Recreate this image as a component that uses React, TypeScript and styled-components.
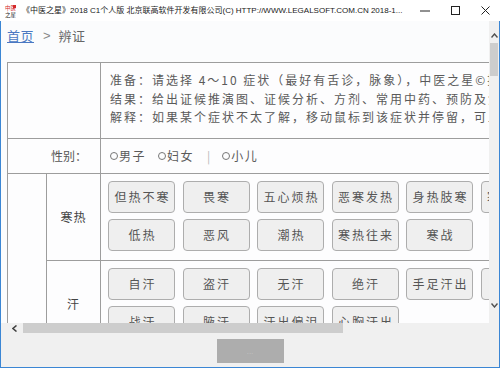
import React from "react";
import styled, { createGlobalStyle } from "styled-components";

const GlobalStyle = createGlobalStyle`
  html, body {
    margin: 0;
    padding: 0;
    background: #ffffff;
  }
  body {
    font-family: "Noto Sans CJK SC", sans-serif;
  }
`;

const Window = styled.div`
  width: 500px;
  height: 368px;
  display: flex;
  flex-direction: column;
  background: #ffffff;
  overflow: hidden;
`;

const TitleBar = styled.div`
  height: 21px;
  flex-shrink: 0;
  display: flex;
  align-items: center;
  padding-left: 5px;
  background: #ffffff;
`;

const TitleText = styled.div`
  flex: 1;
  margin-left: 5px;
  overflow: hidden;
  white-space: nowrap;
  font-family: "Liberation Sans", "Noto Sans CJK SC", sans-serif;
  font-size: 8px;
  line-height: 21px;
  color: #1a1a1a;
`;

const Controls = styled.div`
  display: flex;
  height: 21px;
`;

const ControlButton = styled.div`
  width: 30px;
  height: 21px;
  display: flex;
  align-items: center;
  justify-content: center;
`;

const Client = styled.div`
  flex: 1;
  display: flex;
  flex-direction: column;
  border: 1px solid #3b86d4;
  border-top: none;
  min-height: 0;
`;

const ScrollArea = styled.div`
  height: 302px;
  flex-shrink: 0;
  display: flex;
`;

const Viewport = styled.div`
  flex: 1;
  overflow: hidden;
  padding-left: 6px;
  background: #fbfcfd;
  color: #5a5a5a;
`;

const VScroll = styled.div`
  width: 10px;
  flex-shrink: 0;
  display: flex;
  flex-direction: column;
  align-items: center;
  background: #f0f0f0;
`;

const ArrowBox = styled.div<{ $h: number; $pad?: string }>`
  height: ${(p) => p.$h}px;
  width: 100%;
  flex-shrink: 0;
  display: flex;
  align-items: center;
  justify-content: center;
  padding: ${(p) => p.$pad || "0"};
  box-sizing: border-box;
`;

const VThumb = styled.div`
  width: 8px;
  height: 33px;
  flex-shrink: 0;
  background: #cdcdcd;
`;

const Spacer = styled.div`
  flex: 1;
`;

const HScroll = styled.div`
  height: 10px;
  flex-shrink: 0;
  display: flex;
  align-items: stretch;
  background: #f0f0f0;
`;

const HArrow = styled.div`
  width: 22px;
  display: flex;
  align-items: center;
  justify-content: center;
  padding-left: 4px;
  box-sizing: border-box;
`;

const HThumb = styled.div`
  width: 320px;
  background: #cdcdcd;
`;

const Footer = styled.div`
  flex: 1;
  display: flex;
  justify-content: center;
  align-items: flex-start;
  padding-top: 6px;
  background: #f0f0f0;
`;

const FooterButton = styled.div`
  width: 67px;
  height: 24px;
  background: #adadad;
  color: #c4c4c4;
  font-family: "Liberation Sans", sans-serif;
  font-size: 8px;
  line-height: 26px;
  text-align: center;
`;

const Breadcrumb = styled.div`
  height: 41px;
  padding-top: 6px;
  box-sizing: border-box;
  display: flex;
  align-items: flex-start;
  font-size: 13px;
  line-height: 17px;
  color: #666;
`;

const Crumb = styled.a`
  color: #4a78c2;
  text-decoration: underline;
  letter-spacing: 0.5px;
`;

const Sep = styled.span`
  margin: 0 8px 0 9px;
  font-family: "Liberation Sans", sans-serif;
  color: #888;
`;

const Current = styled.span`
  letter-spacing: 0.5px;
  color: #666;
`;

const Table = styled.table`
  border-collapse: collapse;
  table-layout: fixed;
  width: 660px;
  background: #fdfdfe;
  font-size: 12px;
  color: #5a5a5a;
`;

const Cell = styled.td<{ $align?: string; $strong?: boolean }>`
  border: 1px solid #9d9d9d;
  border-left-color: ${(p) => (p.$strong ? "#7a7a7a" : "#9d9d9d")};
  padding: 0;
  vertical-align: middle;
  text-align: ${(p) => p.$align || "left"};
`;

const Notes = styled.div`
  padding: 8px 0 11px 9px;
  line-height: 18.5px;
  letter-spacing: 2px;
  white-space: nowrap;
`;

const FieldLabel = styled.div`
  padding: 8px 13px 8px 0;
  line-height: 18px;
  text-align: right;
  color: #555;
`;

const OptionRow = styled.div`
  display: flex;
  align-items: center;
  padding: 8px 0 8px 9px;
  line-height: 18px;
`;

const Option = styled.span`
  display: inline-flex;
  align-items: center;
  gap: 1px;
  margin-right: 12px;
  letter-spacing: 1.5px;
`;

const RadioDot = styled.span`
  width: 6px;
  height: 6px;
  border: 1px solid #777;
  border-radius: 50%;
  display: inline-block;
`;

const Divider = styled.span`
  color: #b8b8b8;
  margin: 0 12px 0 1px;
`;

const GroupLabel = styled.div`
  text-align: center;
  font-size: 12px;
  letter-spacing: 1px;
  color: #444;
`;

const ButtonGrid = styled.div`
  display: grid;
  grid-template-columns: repeat(6, 67px);
  column-gap: 7.5px;
  row-gap: 6px;
  padding: 7px 0 9px 7px;
`;

const SymptomButton = styled.div`
  height: 32px;
  box-sizing: border-box;
  border: 1px solid #adadad;
  border-radius: 4px;
  background: #efefef;
  display: flex;
  align-items: center;
  justify-content: center;
  padding-left: 2px;
  font-size: 12px;
  letter-spacing: 2px;
  color: #555;
`;

const chevron = (d: string, w = 7, h = 5) => (
  <svg width={w} height={h} viewBox={`0 0 ${w} ${h}`}>
    <polyline points={d} fill="none" stroke="#505050" strokeWidth="1.4" />
  </svg>
);

const AppIcon = () => (
  <svg width="12" height="14" viewBox="0 0 12 14">
    <rect x="8" y="1" width="3" height="3" fill="#d42a2a" />
    <text x="0" y="6" fontSize="5.5" fill="#d42a2a" fontFamily="Noto Sans CJK SC">
      中医
    </text>
    <text x="0" y="12.5" fontSize="5.5" fill="#222" fontFamily="Noto Sans CJK SC">
      之星
    </text>
  </svg>
);

const hanre = [
  "但热不寒",
  "畏寒",
  "五心烦热",
  "恶寒发热",
  "身热肢寒",
  "寒热起伏",
  "低热",
  "恶风",
  "潮热",
  "寒热往来",
  "寒战",
];

const han = [
  "自汗",
  "盗汗",
  "无汗",
  "绝汗",
  "手足汗出",
  "头汗",
  "战汗",
  "腋汗",
  "汗出偏沮",
  "心胸汗出",
];

export default function App() {
  return (
    <>
      <GlobalStyle />
      <Window>
        <TitleBar>
          <AppIcon />
          <TitleText>
            《中医之星》2018 C1个人版 北京联高软件开发有限公司(C) HTTP://WWW.LEGALSOFT.COM.CN 2018-1...
          </TitleText>
          <Controls>
            <ControlButton>
              <svg width="10" height="2" viewBox="0 0 10 2">
                <line x1="0" y1="1" x2="10" y2="1" stroke="#222" strokeWidth="1" />
              </svg>
            </ControlButton>
            <ControlButton>
              <svg width="9" height="9" viewBox="0 0 9 9">
                <rect x="0.5" y="0.5" width="8" height="8" fill="none" stroke="#222" strokeWidth="1" />
              </svg>
            </ControlButton>
            <ControlButton>
              <svg width="9" height="9" viewBox="0 0 9 9">
                <line x1="0.5" y1="0.5" x2="8.5" y2="8.5" stroke="#222" strokeWidth="1" />
                <line x1="8.5" y1="0.5" x2="0.5" y2="8.5" stroke="#222" strokeWidth="1" />
              </svg>
            </ControlButton>
          </Controls>
        </TitleBar>
        <Client>
          <ScrollArea>
            <Viewport>
              <Breadcrumb>
                <Crumb>首页</Crumb>
                <Sep>&gt;</Sep>
                <Current>辨证</Current>
              </Breadcrumb>
              <Table>
                <colgroup>
                  <col style={{ width: 39 }} />
                  <col style={{ width: 54 }} />
                  <col />
                </colgroup>
                <tbody>
                  <tr>
                    <Cell colSpan={2} />
                    <Cell $strong>
                      <Notes>
                        <div>准备：请选择 4～10 症状（最好有舌诊，脉象），中医之星©提供辨证结果。</div>
                        <div>结果：给出证候推演图、证候分析、方剂、常用中药、预防及注意事项。</div>
                        <div>解释：如果某个症状不太了解，移动鼠标到该症状并停留，可显示其解释。</div>
                      </Notes>
                    </Cell>
                  </tr>
                  <tr>
                    <Cell colSpan={2}>
                      <FieldLabel>性别：</FieldLabel>
                    </Cell>
                    <Cell $strong>
                      <OptionRow>
                        <Option>
                          <RadioDot />
                          男子
                        </Option>
                        <Option>
                          <RadioDot />
                          妇女
                        </Option>
                        <Divider>|</Divider>
                        <Option>
                          <RadioDot />
                          小儿
                        </Option>
                      </OptionRow>
                    </Cell>
                  </tr>
                  <tr>
                    <Cell rowSpan={2} />
                    <Cell>
                      <GroupLabel>寒热</GroupLabel>
                    </Cell>
                    <Cell $strong>
                      <ButtonGrid>
                        {hanre.map((s) => (
                          <SymptomButton key={s}>{s}</SymptomButton>
                        ))}
                      </ButtonGrid>
                    </Cell>
                  </tr>
                  <tr>
                    <Cell>
                      <GroupLabel>汗</GroupLabel>
                    </Cell>
                    <Cell $strong>
                      <ButtonGrid>
                        {han.map((s) => (
                          <SymptomButton key={s}>{s}</SymptomButton>
                        ))}
                      </ButtonGrid>
                    </Cell>
                  </tr>
                </tbody>
              </Table>
            </Viewport>
            <VScroll>
              <ArrowBox $h={22} $pad="6px 0 0">
                {chevron("0.5,4.5 3.5,1 6.5,4.5")}
              </ArrowBox>
              <VThumb />
              <Spacer />
              <ArrowBox $h={26} $pad="0 0 10px">
                {chevron("0.5,0.5 3.5,4 6.5,0.5")}
              </ArrowBox>
            </VScroll>
          </ScrollArea>
          <HScroll>
            <HArrow>
              <svg width="5" height="7" viewBox="0 0 5 7">
                <polyline points="4.5,0.5 1,3.5 4.5,6.5" fill="none" stroke="#404040" strokeWidth="1.5" />
              </svg>
            </HArrow>
            <HThumb />
          </HScroll>
          <Footer>
            <FooterButton>...</FooterButton>
          </Footer>
        </Client>
      </Window>
    </>
  );
}
